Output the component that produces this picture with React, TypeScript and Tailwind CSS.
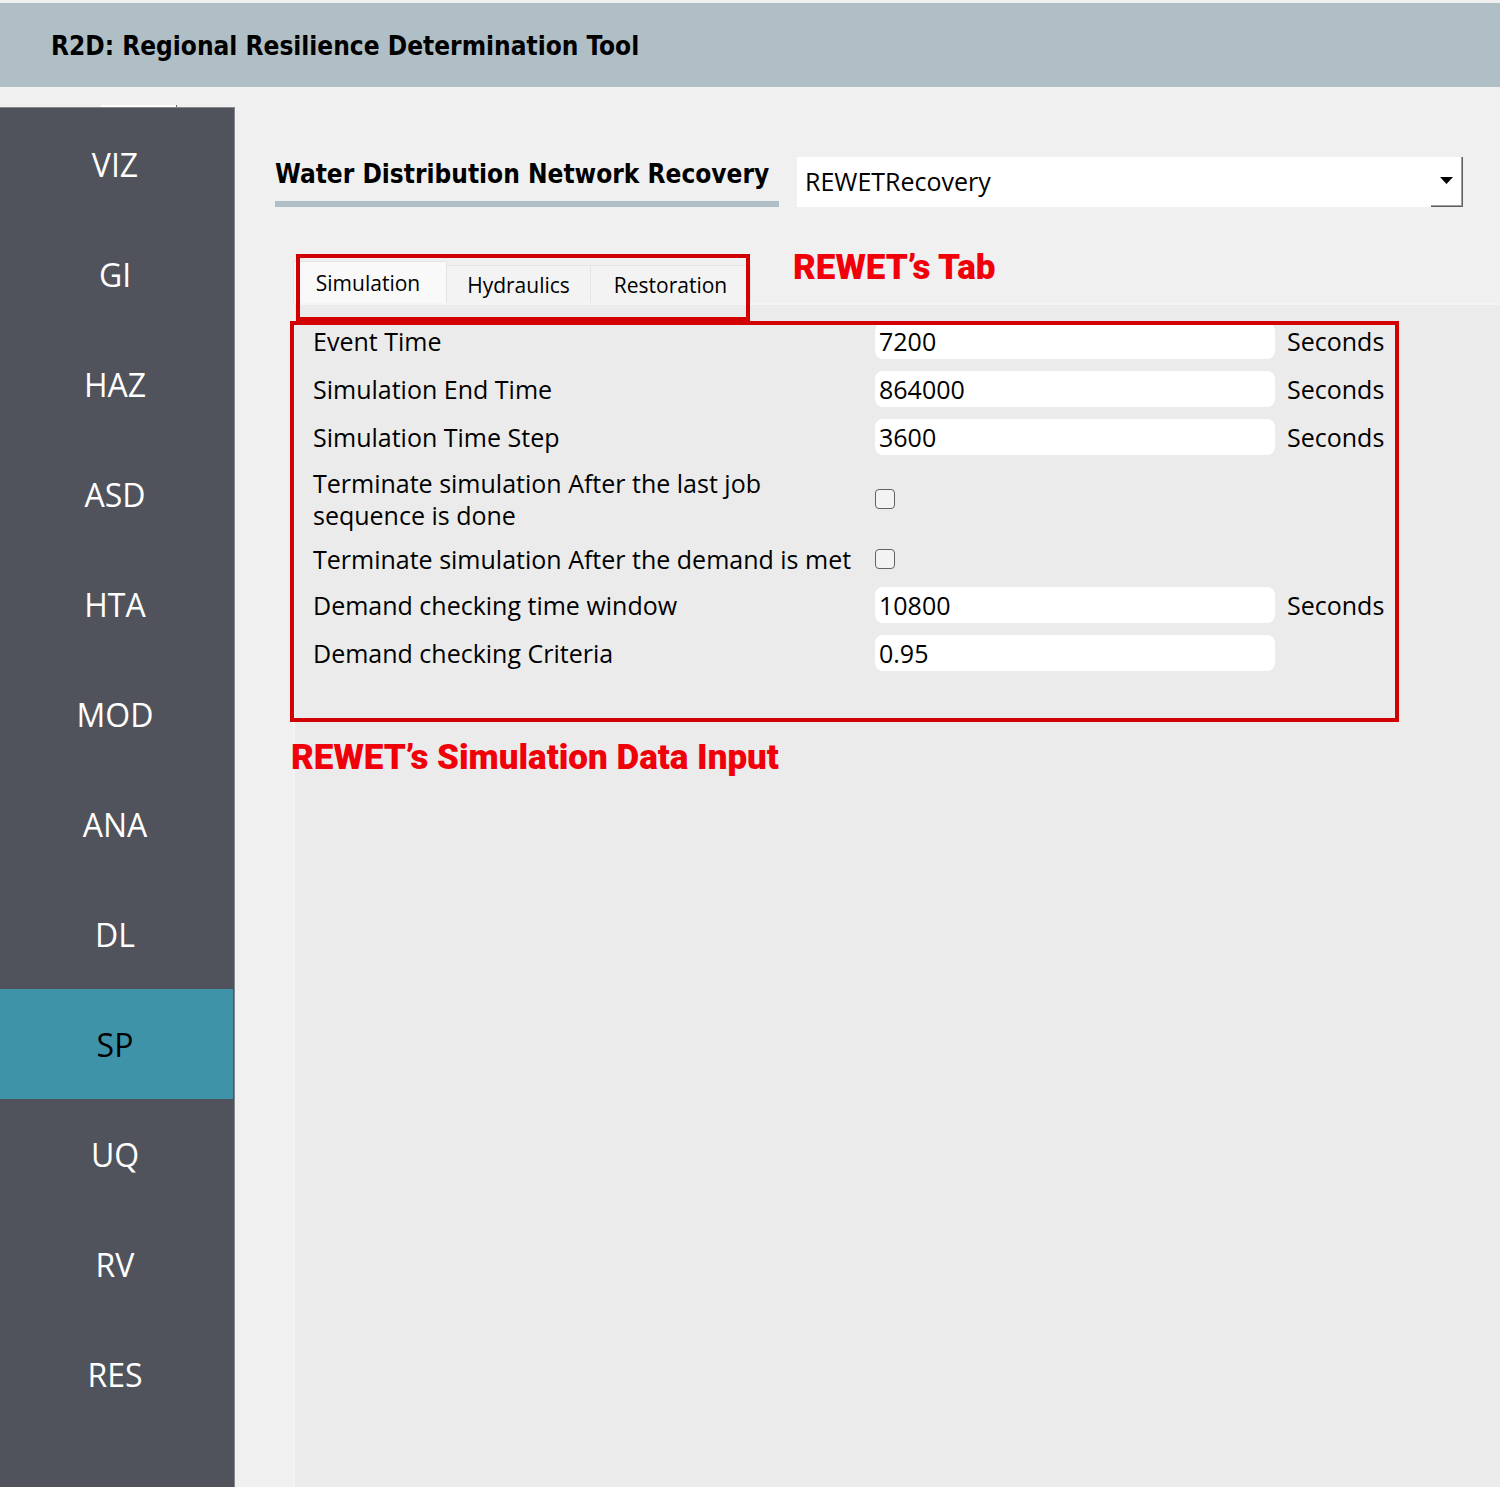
import { useState } from "react";

const steps = ["VIZ", "GI", "HAZ", "ASD", "HTA", "MOD", "ANA", "DL", "SP", "UQ", "RV", "RES"];
const tabs = ["Simulation", "Hydraulics", "Restoration"];

function Sidebar() {
  const [active, setActive] = useState("SP");
  return (
    <nav
      aria-label="Workflow"
      className="flex w-[235px] shrink-0 flex-col border-t border-r border-[#85878d] bg-[#50535b] pt-px pr-px text-[32px]"
    >
      {steps.map((s) => (
        <button
          key={s}
          type="button"
          onClick={() => setActive(s)}
          className={
            s === active
              ? "h-[110px] bg-[#3e93a8] pt-0.5 pr-[3px] text-black"
              : "h-[110px] pt-0.5 pr-[3px] text-white"
          }
        >
          {s}
        </button>
      ))}
    </nav>
  );
}

function NumberRow({ id, label, value, unit }: { id: string; label: string; value: string; unit?: string }) {
  return (
    <>
      <label htmlFor={id}>{label}</label>
      <input
        id={id}
        type="text"
        defaultValue={value}
        className="h-9 w-full min-w-0 rounded-lg bg-white px-1 outline-none"
      />
      <span>{unit}</span>
    </>
  );
}

function CheckRow({ id, label }: { id: string; label: string }) {
  return (
    <>
      <label htmlFor={id}>{label}</label>
      <input
        id={id}
        type="checkbox"
        className="size-5 appearance-none rounded border border-[#626262] bg-[#f3f3f3] checked:bg-[#3e93a8]"
      />
      <span />
    </>
  );
}

function SimulationForm() {
  return (
    <form className="relative mr-[101px] grid grid-cols-[11fr_8fr_100px] items-center gap-3 pt-[18px] pr-3 pb-[51px] pl-[18px] text-[25px] leading-8">
      <NumberRow id="event" label="Event Time" value="7200" unit="Seconds" />
      <NumberRow id="end" label="Simulation End Time" value="864000" unit="Seconds" />
      <NumberRow id="step" label="Simulation Time Step" value="3600" unit="Seconds" />
      <CheckRow id="lastjob" label="Terminate simulation After the last job sequence is done" />
      <CheckRow id="demand" label="Terminate simulation After the demand is met" />
      <NumberRow id="window" label="Demand checking time window" value="10800" unit="Seconds" />
      <NumberRow id="criteria" label="Demand checking Criteria" value="0.95" />
      <div className="pointer-events-none absolute top-4 right-0 bottom-0 -left-[5px] border-4 border-[#d20000]" />
    </form>
  );
}

export default function App() {
  const [tab, setTab] = useState("Simulation");
  return (
    <div className="flex min-h-screen flex-col bg-[#f0f0f0] pt-[3px] font-['Open_Sans',sans-serif] text-black">
      <header className="flex h-[84px] items-center bg-[#b0bec5] pt-0.5 pl-[51px]">
        <h1 className="font-['DejaVu_Sans_Condensed',sans-serif] text-[26px] leading-8 font-bold">
          R2D: Regional Resilience Determination Tool
        </h1>
      </header>
      <div className="flex h-5 items-end pl-[101px]">
        <div className="h-0.5 w-[76px] border-r border-[#696969] bg-white" />
      </div>
      <div className="flex grow">
        <Sidebar />
        <main className="flex min-w-0 grow flex-col pt-[50px]">
          <div className="flex items-end gap-[18px] pr-[37px] pl-10">
            <label
              htmlFor="method"
              className="w-[504px] border-b-[6px] border-[#b0bec5] pb-[11px] font-['DejaVu_Sans_Condensed',sans-serif] text-[26px] leading-8 font-bold whitespace-nowrap"
            >
              Water Distribution Network Recovery
            </label>
            <div className="relative min-w-0 grow">
              <select
                id="method"
                className="block h-[50px] w-full appearance-none bg-white pl-2 text-[25px] outline-none"
              >
                <option>REWETRecovery</option>
              </select>
              <div className="pointer-events-none absolute inset-y-0 right-0 flex w-8 justify-center border-r border-b border-[#5f5f5f]">
                <div className="flex grow justify-center border-r border-b border-[#a0a0a0] pt-5">
                  <svg width="13" height="7" viewBox="0 0 13 7" aria-hidden="true">
                    <path d="M0 0h13L6.500 7z" fill="#000" />
                  </svg>
                </div>
              </div>
            </div>
          </div>

          <section className="mt-[54px] flex grow flex-col pl-[58px]">
            <div className="relative flex h-[42px] items-end text-[21px] leading-7" role="tablist">
              {tabs.map((t) => (
                <button
                  key={t}
                  type="button"
                  role="tab"
                  aria-selected={t === tab}
                  onClick={() => setTab(t)}
                  className={
                    t === tab
                      ? "h-[42px] w-[154px] border border-b-0 border-[#e5e5e5] bg-[#f9f9f9] pr-1"
                      : "h-[38px] w-[144px] border-t border-r border-[#e5e5e5] bg-[#f3f3f3] last:w-[160px]"
                  }
                >
                  {t}
                </button>
              ))}
            </div>
            <div className="relative grow border-t-2 border-l-2 border-[#f4f4f4] bg-[#ebebeb]">
              <SimulationForm />
              <p className="mt-4 -ml-1 font-['Roboto',sans-serif] text-[35px] leading-10 font-black text-[#f00008]">
                REWET’s Simulation Data Input
              </p>
              <div className="pointer-events-none absolute -top-[51px] left-px h-[67px] w-[454px] border-4 border-[#d20000]" />
              <p className="absolute -top-[57px] left-[498px] font-['Roboto',sans-serif] text-[35px] leading-10 font-black text-[#f00008]">
                REWET’s Tab
              </p>
            </div>
          </section>
        </main>
      </div>
    </div>
  );
}
